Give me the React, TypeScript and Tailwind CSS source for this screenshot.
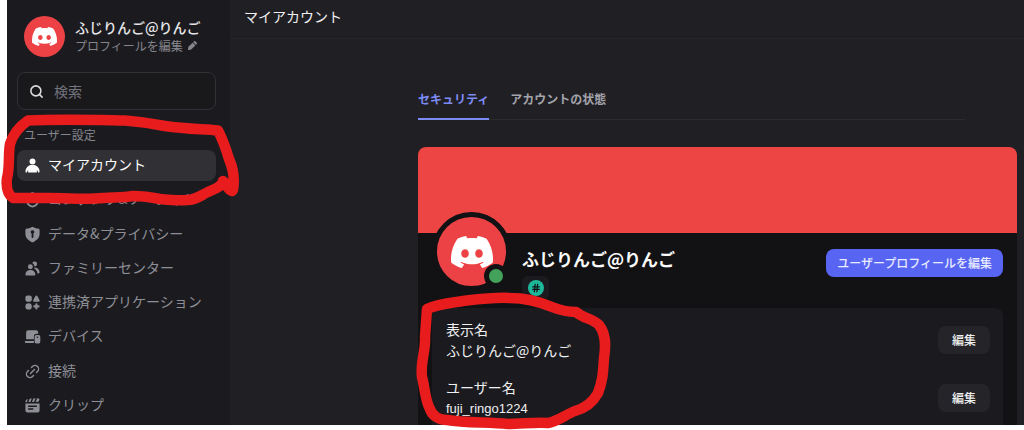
import type { ReactNode } from 'react';
import { Hash, Link2, Search } from 'lucide-react';
import { SiDiscord } from 'react-icons/si';

const DISPLAY_NAME = 'ふじりんご@りんご';

function Glyph({
  children,
  className = 'size-[17px]',
}: {
  children: ReactNode;
  className?: string;
}) {
  return (
    <svg
      viewBox="0 0 24 24"
      fill="currentColor"
      aria-hidden="true"
      className={`shrink-0 ${className}`}
    >
      {children}
    </svg>
  );
}

const UserGlyph = (
  <Glyph>
    <circle cx="12" cy="6.2" r="4.2" />
    <path d="M11.53 11A9.53 9.53 0 0 0 2 20.53c0 .81.66 1.47 1.47 1.47h.22c.24 0 .44-.17.5-.4.29-1.12.84-2.17 1.32-2.91.14-.21.43-.1.4.15l-.1 2.61c-.02.3.2.55.5.55h11.4a.5.5 0 0 0 .5-.55l-.1-2.6c-.02-.26.27-.37.41-.16.48.74 1.03 1.8 1.32 2.9.06.24.26.41.5.41h.22c.81 0 1.47-.66 1.47-1.47A9.53 9.53 0 0 0 12.47 11h-.94Z" />
  </Glyph>
);

const SafetyGlyph = (
  <Glyph>
    <path
      d="M12 3 4 6v7c0 5 4 8 8 9 4-1 8-4 8-9V6Z"
      fill="none"
      stroke="currentColor"
      strokeWidth="2.4"
      strokeLinejoin="round"
    />
  </Glyph>
);

const ShieldGlyph = (
  <Glyph>
    <path
      fillRule="evenodd"
      d="M4.3 3.6C7 3.4 8.8 2.6 10.500 1.700a2.600 2.600 0 0 1 3 0C15.200 2.600 17 3.400 19.700 3.600A2.200 2.200 0 0 1 22 5.800V11c0 5.600-3.800 9.200-9.200 11.800a1.800 1.800 0 0 1-1.600 0C5.800 20.200 2 16.600 2 11V5.800a2.200 2.200 0 0 1 2.300-2.200ZM12 6a2.500 2.500 0 0 0-1.300 4.700v4.800a1.300 1.300 0 0 0 2.600 0v-4.800A2.500 2.500 0 0 0 12 6Z"
    />
  </Glyph>
);

const FamilyGlyph = (
  <Glyph>
    <circle cx="9" cy="9.5" r="3.5" />
    <path d="M9 14c-4.200 0-7 2.800-7 6.400C2 21.300 2.700 22 3.600 22h10.800c.9 0 1.600-.7 1.600-1.600C16 16.800 13.200 14 9 14Z" />
    <path d="M15 2a3.500 3.500 0 0 0-3.200 2.100 5.500 5.500 0 0 1 2.900 4.900H15a3.500 3.500 0 0 0 0-7ZM15.300 10.600c-.6 0-1 .5-.8 1 .2.400.5.800.9 1.100 1.900 1.300 3.100 3.200 3.500 5.500.1.500.5.800 1 .8h.6c.9 0 1.500-.7 1.500-1.600 0-3.700-2.800-6.600-6.700-6.800Z" />
  </Glyph>
);

const AppsGlyph = (
  <Glyph>
    <rect x="2" y="2" width="9" height="9" rx="3" />
    <path d="M16 3.200c.7-1.400 2.300-1.400 3 0l2.800 5.200c.7 1.300-.1 2.600-1.500 2.600h-5.600c-1.400 0-2.200-1.300-1.500-2.600Z" />
    <circle cx="6.5" cy="17.5" r="4.5" />
    <path d="M16 14.500a1.500 1.500 0 0 1 3 0V16h1.500a1.500 1.500 0 0 1 0 3H19v1.500a1.500 1.500 0 0 1-3 0V19h-1.500a1.500 1.500 0 0 1 0-3H16Z" />
  </Glyph>
);

const DevicesGlyph = (
  <Glyph>
    <path d="M3 6a3 3 0 0 1 3-3h11a3 3 0 0 1 3 3v2h-2a4 4 0 0 0-4 4v4H3Z" />
    <path d="M2 18.500h12V21H3a1.200 1.200 0 0 1-1-2.500Z" />
    <path
      fillRule="evenodd"
      d="M17.500 10h3a2.500 2.500 0 0 1 2.500 2.500v7a2.500 2.500 0 0 1-2.500 2.500h-3a2.500 2.500 0 0 1-2.500-2.500v-7a2.500 2.500 0 0 1 2.500-2.500ZM19 12a1.100 1.100 0 1 0 0 2.200 1.100 1.100 0 0 0 0-2.200Z"
    />
  </Glyph>
);

const ClipsGlyph = (
  <Glyph>
    <path d="M2 7.500C2 5 3.300 3.400 5.600 2.900L3.900 7.500ZM8 2.600l3-.4-2 5H6.200ZM13.200 2.200l3-.3-2 5.200h-2.900ZM18.400 1.900l2.400.1c.9.400 1.200 1.300.9 2.100l-1.300 2.500-3.900.4Z" />
    <path
      fillRule="evenodd"
      d="M2 9h20v10a3 3 0 0 1-3 3H5a3 3 0 0 1-3-3Zm4.500 3a1 1 0 0 0 0 2h11a1 1 0 0 0 0-2Zm0 4a1 1 0 0 0 0 2h6a1 1 0 0 0 0-2Z"
    />
  </Glyph>
);

const PencilGlyph = (
  <Glyph className="size-[11px]">
    <path d="m13.96 5.46 4.58 4.58a1 1 0 0 0 1.42 0l1.38-1.38a2 2 0 0 0 0-2.82l-3.18-3.18a2 2 0 0 0-2.82 0l-1.38 1.38a1 1 0 0 0 0 1.42ZM2.11 20.16l.73-4.22a3 3 0 0 1 .83-1.61l7.87-7.87a1 1 0 0 1 1.42 0l4.58 4.58a1 1 0 0 1 0 1.42l-7.87 7.87a3 3 0 0 1-1.6.83l-4.23.73a1.500 1.500 0 0 1-1.730-1.730Z" />
  </Glyph>
);

interface NavItem {
  label: string;
  icon: ReactNode;
}

const NAV_ITEMS: NavItem[] = [
  { label: 'マイアカウント', icon: UserGlyph },
  { label: 'コンテンツ&ソーシャル', icon: SafetyGlyph },
  { label: 'データ&プライバシー', icon: ShieldGlyph },
  { label: 'ファミリーセンター', icon: FamilyGlyph },
  { label: '連携済アプリケーション', icon: AppsGlyph },
  { label: 'デバイス', icon: DevicesGlyph },
  {
    label: '接続',
    icon: <Link2 className="size-[17px] shrink-0 -rotate-45" strokeWidth={2} />,
  },
  { label: 'クリップ', icon: ClipsGlyph },
];

const FIELDS = [
  { label: '表示名', value: DISPLAY_NAME, valueClass: '' },
  {
    label: 'ユーザー名',
    value: 'fuji_ringo1224',
    valueClass: "font-['Liberation_Sans',sans-serif] text-[13px] leading-[21px]",
  },
];

function Sidebar() {
  return (
    <aside className="flex w-[223px] shrink-0 flex-col bg-[#1b1b1f] pt-4 pr-[14px] pb-1 pl-[10px]">
      <div className="flex items-center gap-[10px] pl-[7px]">
        <div className="flex size-[41px] shrink-0 items-center justify-center rounded-full bg-[#ed4245]">
          <SiDiscord className="size-[25px] text-white" />
        </div>
        <div className="pb-[2px] whitespace-nowrap">
          <div className="text-sm leading-5 font-medium text-[#e6e6e9]">
            {DISPLAY_NAME}
          </div>
          <button
            type="button"
            className="flex items-center gap-1 text-xs leading-[18px] text-[#85858d]"
          >
            プロフィールを編集
            {PencilGlyph}
          </button>
        </div>
      </div>

      <label className="mt-[15px] flex h-[38px] shrink-0 items-center gap-[10px] rounded-lg border border-[#303036] bg-[#19191c] px-[11px]">
        <Search className="size-[15px] shrink-0 text-[#dcdce0]" strokeWidth={2.5} />
        <input
          type="search"
          placeholder="検索"
          aria-label="検索"
          className="w-full min-w-0 bg-transparent text-sm text-white outline-none placeholder:text-[#74747c]"
        />
      </label>

      <h2 className="mt-4 mb-[6px] px-[7px] text-xs leading-[18px] text-[#85858d]">
        ユーザー設定
      </h2>
      <nav className="flex flex-1 flex-col justify-between">
        {NAV_ITEMS.map((item, i) => (
          <a
            key={item.label}
            href="#"
            aria-current={i === 0 ? 'page' : undefined}
            className={`flex h-[31px] items-center gap-[7px] rounded-lg px-[7px] text-sm whitespace-nowrap ${
              i === 0 ? 'bg-[#303035] text-[#fbfbfb]' : 'text-[#8e8e96]'
            }`}
          >
            {item.icon}
            <span className="pb-[3px]">{item.label}</span>
          </a>
        ))}
      </nav>
    </aside>
  );
}

function Tabs() {
  return (
    <div
      role="tablist"
      className="mr-[52px] flex gap-[21px] border-b border-[#2b2b30] text-xs font-bold"
    >
      <button
        type="button"
        role="tab"
        aria-selected="true"
        className="-mb-px border-b-2 border-[#7d8bf5] pb-[10px] leading-[18px] text-[#7d8bf5]"
      >
        セキュリティ
      </button>
      <button
        type="button"
        role="tab"
        aria-selected="false"
        className="pb-[11px] leading-[18px] text-[#a3a3ab]"
      >
        アカウントの状態
      </button>
    </div>
  );
}

function AccountCard() {
  return (
    <section className="mt-[27px] flex flex-1 flex-col overflow-hidden rounded-t-lg bg-[#121214]">
      <div className="h-[86px] shrink-0 bg-[#ed4544]" />
      <div className="flex h-[75px] shrink-0 items-start px-[14px]">
        <div className="relative -mt-[21px] flex size-[79px] shrink-0 items-center justify-center rounded-full border-[5px] border-[#121214] bg-[#ed4245]">
          <SiDiscord className="size-[42px] text-white" />
          <span className="absolute -right-[2px] -bottom-[2px] size-6 rounded-full border-[5px] border-[#121214] bg-[#43a25a]" />
        </div>
        <div className="mt-[14px] ml-[11px] flex-1 whitespace-nowrap">
          <h3 className="text-[17px] leading-6 font-bold text-[#fbfbfb]">
            {DISPLAY_NAME}
          </h3>
          <div className="mt-[5px] flex h-6 w-[27px] items-center justify-center rounded-md bg-[#1b1b1f]">
            <span className="flex size-4 items-center justify-center rounded-full bg-[#1db899]">
              <Hash className="size-[10px] text-[#121214]" strokeWidth={3} />
            </span>
          </div>
        </div>
        <button
          type="button"
          className="mt-4 h-7 rounded-lg bg-[#5865f2] px-[11px] text-xs font-medium whitespace-nowrap text-[#e9ebff]"
        >
          ユーザープロフィールを編集
        </button>
      </div>
      <div className="mx-[14px] flex flex-1 flex-col gap-4 rounded-t-lg bg-[#1b1b1f] pt-[11px] pr-[13px] pl-[14px]">
        {FIELDS.map((field) => (
          <div key={field.label} className="flex items-center justify-between">
            <dl className="text-sm leading-[21px] text-[#f0f0f2]">
              <dt>{field.label}</dt>
              <dd className={field.valueClass}>{field.value}</dd>
            </dl>
            <button
              type="button"
              className="h-7 w-[52px] rounded-lg bg-[#252529] text-xs font-medium text-[#efeff0]"
            >
              編集
            </button>
          </div>
        ))}
      </div>
    </section>
  );
}

/** Hand-drawn marker loops laid over the screen. */
function MarkerLoops() {
  return (
    <svg
      viewBox="0 0 1024 430"
      fill="none"
      stroke="#e81c1c"
      strokeWidth="10.500"
      strokeLinecap="round"
      strokeLinejoin="round"
      aria-hidden="true"
      className="pointer-events-none absolute top-0 left-0 w-full"
    >
      <path d="M28 120.500C60 119 95 120 125 120.500C145 122 155 124 165 126C185 129 200 129 218 130.500C222 138 226 149 229 159C233 168 235 178 233 190L232 191C228 190 227 185 223 181C222 187 214 189 208 192C201 195 197 200 187 200C178 201 170 200 160 199C150 197 140 196 133 196C122 198 112 197 103 198C85 200 70 198 50 198L13 198C7 194 6 186 7 178C10 168 8 155 10 144C13 134 20 126 28 120.500Z" />
      <path d="M427 309C438 304 450 303 463 301C480 299 495 297 510 298C525 298 540 302 552 307C562 311 568 312 576 312C584 319 592 318 599 325C606 334 606 345 604 358C603 372 603 380 598 393C593 402 586 408 575 411C565 415 558 421 548 423C535 422 522 424 508 424C488 422 465 423 447 420C438 420 432 415 430 409C425 400 425 388 422 377C420 363 426 350 425 337Z" />
    </svg>
  );
}

export default function App() {
  return (
    <div
      lang="ja"
      className="relative h-screen min-h-[430px] overflow-hidden bg-white pb-[5px] pl-[7px] font-['Noto_Sans_CJK_JP',sans-serif]"
    >
      <div className="flex h-full overflow-hidden">
        <Sidebar />
        <main className="flex min-w-0 flex-1 flex-col bg-[#202024]">
          <header className="shrink-0 border-b border-[#26262a] px-[14px] pt-[6px] pb-[11px]">
            <h1 className="text-sm leading-[21px] text-[#f0f0f2]">
              マイアカウント
            </h1>
          </header>
          <div className="flex flex-1 flex-col pt-[51px] pr-[7px] pl-[188px]">
            <Tabs />
            <AccountCard />
          </div>
        </main>
      </div>
      <MarkerLoops />
    </div>
  );
}
